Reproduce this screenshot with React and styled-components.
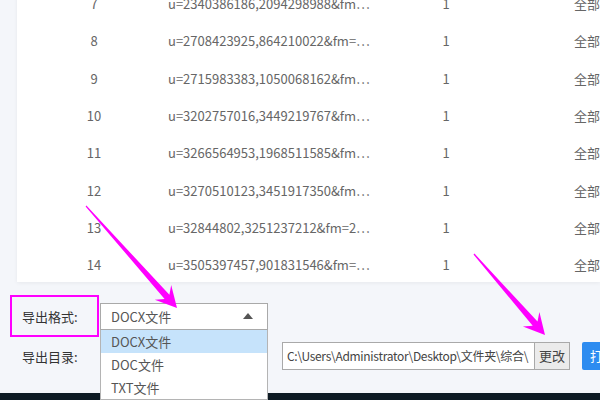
import React from "react";
import styled, { createGlobalStyle } from "styled-components";

const GlobalStyle = createGlobalStyle`
  html, body { margin: 0; padding: 0; }
  body {
    background: #f4f6fa;
    font-family: "Noto Sans CJK SC", "Noto Sans", sans-serif;
  }
`;

const Page = styled.div`
  position: relative;
  width: 600px;
  height: 400px;
  overflow: hidden;
  display: flex;
  flex-direction: column;
  background: #f4f6fa;
`;

const Card = styled.div`
  margin: -15px 0 0 17px;
  height: 297px;
  flex: none;
  background: #fff;
  box-shadow: 0 1px 4px rgba(0, 0, 0, 0.06);
  overflow: hidden;
`;

const Row = styled.div`
  display: grid;
  grid-template-columns: 134px 240px 110px 1fr;
  height: 37.33px;
  align-items: center;
  font-size: 13px;
  color: #666;
  white-space: nowrap;
`;

const Cell = styled.div`
  text-align: ${(p) => p.$align || "left"};
  padding-left: ${(p) => p.$pl || 0}px;
  overflow: hidden;
`;

const Bottom = styled.div`
  flex: 1;
  display: flex;
  flex-direction: column;
  gap: 12px;
  padding: 20px 0 0 22px;
`;

const FormRow = styled.div`
  display: flex;
  align-items: center;
  height: 28px;
`;

const Label = styled.div`
  width: 78px;
  font-size: 13px;
  color: #333;
  flex: none;
`;

const Select = styled.div`
  position: relative;
  display: flex;
  align-items: center;
  justify-content: space-between;
  padding: 0 14px 0 10px;
  box-sizing: border-box;
  width: 168px;
  height: 27px;
  border: 1px solid #a9a9a9;
  background: #fff;
  font-size: 13px;
  color: #555;
`;

const Caret = styled.span`
  width: 0;
  height: 0;
  border-left: 5px solid transparent;
  border-right: 5px solid transparent;
  border-bottom: 6px solid #555;
`;

const Menu = styled.div`
  position: absolute;
  left: -1px;
  top: 26px;
  width: 168px;
  background: #fff;
  border: 1px solid #b4b4b4;
  border-top: none;
  box-sizing: border-box;
  z-index: 5;
`;

const MenuItem = styled.div`
  height: 23px;
  line-height: 23px;
  padding-left: 10px;
  font-size: 13px;
  color: #555;
  background: ${(p) => (p.$active ? "#c6e3fb" : "#fff")};
`;

const PathBox = styled.div`
  margin-left: 182px;
  display: flex;
  height: 28px;
`;

const PathInput = styled.div`
  width: 252px;
  box-sizing: border-box;
  border: 1px solid #a9a9a9;
  border-right: none;
  background: #fff;
  padding-left: 4px;
  font-size: 12px;
  letter-spacing: -0.3px;
  color: #444;
  line-height: 26px;
  white-space: nowrap;
  overflow: hidden;
`;

const ChangeButton = styled.div`
  width: 36px;
  box-sizing: border-box;
  border: 1px solid #a9a9a9;
  background: #ebebeb;
  font-size: 13px;
  color: #444;
  line-height: 26px;
  text-align: center;
`;

const PrimaryButton = styled.div`
  margin-left: 12px;
  width: 60px;
  background: #2d8cf0;
  color: #fff;
  font-size: 13px;
  line-height: 28px;
  padding-left: 8px;
  border-radius: 2px;
`;

const DarkBar = styled.div`
  height: 7px;
  flex: none;
  background: #0e1b24;
`;

const Highlight = styled.div`
  position: absolute;
  left: 10px;
  top: 295px;
  width: 89px;
  height: 42px;
  box-sizing: border-box;
  border: 2px solid #f0f;
  z-index: 6;
`;

const Overlay = styled.svg`
  position: absolute;
  left: 0;
  top: 0;
  z-index: 7;
  pointer-events: none;
`;

const rows = [
  ["7", "u=2340386186,2094298988&fm…"],
  ["8", "u=2708423925,864210022&fm=…"],
  ["9", "u=2715983383,1050068162&fm…"],
  ["10", "u=3202757016,3449219767&fm…"],
  ["11", "u=3266564953,1968511585&fm…"],
  ["12", "u=3270510123,3451917350&fm…"],
  ["13", "u=32844802,3251237212&fm=2…"],
  ["14", "u=3505397457,901831546&fm=…"],
];

function arrowPoints(sx, sy, tx, ty) {
  const dx = tx - sx;
  const dy = ty - sy;
  const len = Math.hypot(dx, dy);
  const ux = dx / len;
  const uy = dy / len;
  const nx = -uy;
  const ny = ux;
  const p = (along, side) => [tx - ux * along + nx * side, ty - uy * along + ny * side];
  const pts = [
    [sx + nx * 0.6, sy + ny * 0.6],
    p(15, 3.2),
    p(21, 11),
    [tx, ty],
    p(21, -11),
    p(15, -3.2),
    [sx - nx * 0.6, sy - ny * 0.6],
  ];
  return pts.map((q) => q[0].toFixed(1) + "," + q[1].toFixed(1)).join(" ");
}

export default function App() {
  return (
    <>
      <GlobalStyle />
      <Page>
        <Card>
          {rows.map(([n, u]) => (
            <Row key={n}>
              <Cell $align="center" $pl={20}>{n}</Cell>
              <Cell $pl={17}>{u}</Cell>
              <Cell $align="center">1</Cell>
              <Cell $pl={73}>全部</Cell>
            </Row>
          ))}
        </Card>
        <Bottom>
          <FormRow>
            <Label>导出格式:</Label>
            <Select>
              <span>DOCX文件</span>
              <Caret />
              <Menu>
                <MenuItem $active>DOCX文件</MenuItem>
                <MenuItem>DOC文件</MenuItem>
                <MenuItem>TXT文件</MenuItem>
              </Menu>
            </Select>
          </FormRow>
          <FormRow>
            <Label>导出目录:</Label>
            <PathBox>
              <PathInput>C:\Users\Administrator\Desktop\文件夹\综合\</PathInput>
              <ChangeButton>更改</ChangeButton>
              <PrimaryButton>打开</PrimaryButton>
            </PathBox>
          </FormRow>
        </Bottom>
        <DarkBar />
        <Highlight />
        <Overlay width="600" height="400" viewBox="0 0 600 400">
          <polygon points={arrowPoints(86, 206, 177, 308)} fill="#f0f" />
          <polygon points={arrowPoints(474, 254, 545, 335)} fill="#f0f" />
        </Overlay>
      </Page>
    </>
  );
}
